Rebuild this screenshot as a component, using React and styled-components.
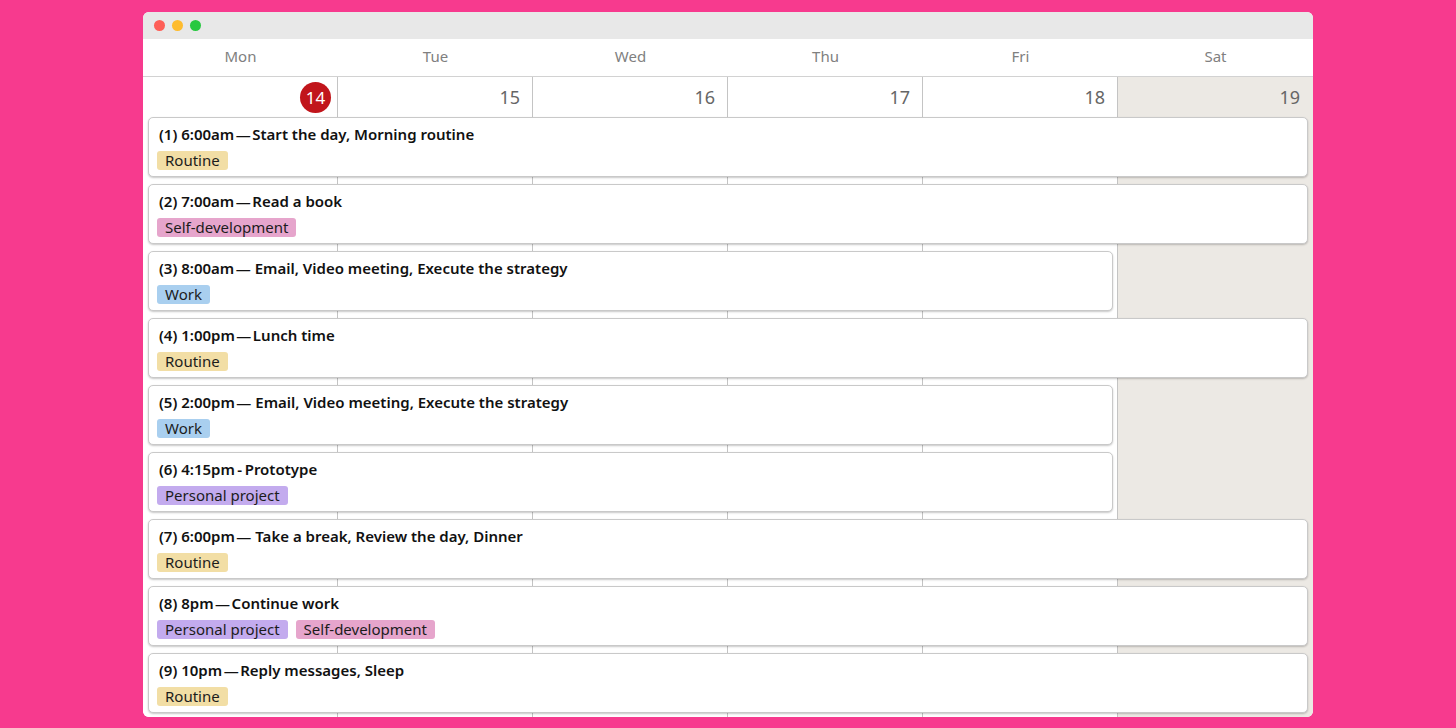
import styled, { createGlobalStyle } from 'styled-components'

const GlobalStyle = createGlobalStyle`
  html, body {
    margin: 0;
    padding: 0;
    background: #f73a8e;
    font-family: 'Noto Sans', 'Open Sans', sans-serif;
  }
`

const Page = styled.div`
  height: 728px;
  padding-top: 12px;
  box-sizing: border-box;
`

const Window = styled.div`
  width: 1170px;
  margin: 0 auto;
  background: #fff;
  border-radius: 6px;
  overflow: hidden;
`

const TitleBar = styled.div`
  height: 27px;
  background: #e8e8e8;
  display: flex;
  align-items: center;
  gap: 7px;
  padding-left: 11px;
`

const Light = styled.span`
  width: 11px;
  height: 11px;
  border-radius: 50%;
  background: ${p => p.$color};
`

const DayNames = styled.div`
  display: grid;
  grid-template-columns: repeat(6, 1fr);
  height: 37px;
  border-bottom: 1px solid #d2d2d2;
`

const DayName = styled.div`
  display: flex;
  align-items: center;
  justify-content: center;
  padding-bottom: 4px;
  font-size: 15px;
  color: #808080;
`

const Board = styled.div`
  display: grid;
  grid-template-columns: repeat(6, 1fr);
  grid-template-rows: 33px repeat(9, 60px);
  row-gap: 7px;
  padding-bottom: 4px;
`

const Column = styled.div`
  grid-column: ${p => p.$index + 1};
  grid-row: 1 / -1;
  margin-bottom: -4px;
  background: ${p => (p.$weekend ? '#ece9e4' : '#fff')};
  border-right: ${p => (p.$last ? 'none' : '1px solid #c4c4c4')};
`

const DateCell = styled.div`
  grid-column: ${p => p.$index + 1};
  grid-row: 1;
  margin-bottom: -7px;
  display: flex;
  align-items: center;
  justify-content: flex-end;
  padding-right: 13px;
  font-size: 18px;
  color: #666;
`

const Today = styled.span`
  width: 31px;
  height: 31px;
  margin-right: -6px;
  border-radius: 50%;
  background: #c1151b;
  color: #fff;
  display: flex;
  align-items: center;
  justify-content: center;
  font-size: 17px;
`

const Event = styled.div`
  grid-column: 1 / ${p => p.$end};
  grid-row: ${p => p.$row};
  margin: 0 5px;
  background: #fff;
  border: 1px solid #c9c9c9;
  border-radius: 5px;
  box-shadow: 0 1px 2px rgba(0, 0, 0, 0.22);
  padding: 6px 10px 0 8px;
  display: flex;
  flex-direction: column;
  gap: 7px;
  z-index: 1;
`

const Title = styled.div`
  font-size: 15px;
  font-weight: 600;
  line-height: 20px;
  color: #111;
  padding-left: 2px;
`

const Tags = styled.div`
  display: flex;
  gap: 8px;
`

const tagColors = {
  Routine: '#f2dea5',
  'Self-development': '#e6a5cc',
  Work: '#a9cfef',
  'Personal project': '#c3abee',
}

const Tag = styled.span`
  font-size: 15px;
  line-height: 19px;
  padding: 0 8px;
  border-radius: 3px;
  color: #1c1c1c;
  background: ${p => tagColors[p.$name]};
`

const days = [
  ['Mon', 14],
  ['Tue', 15],
  ['Wed', 16],
  ['Thu', 17],
  ['Fri', 18],
  ['Sat', 19],
]

const events = [
  { title: '(1) 6:00am\u200a—\u200aStart the day, Morning routine', tags: ['Routine'], full: true },
  { title: '(2) 7:00am\u200a—\u200aRead a book', tags: ['Self-development'], full: true },
  { title: '(3) 8:00am\u200a— Email, Video meeting, Execute the strategy', tags: ['Work'], full: false },
  { title: '(4) 1:00pm\u200a—\u200aLunch time', tags: ['Routine'], full: true },
  { title: '(5) 2:00pm\u200a— Email, Video meeting, Execute the strategy', tags: ['Work'], full: false },
  { title: '(6) 4:15pm\u2009-\u2009Prototype', tags: ['Personal project'], full: false },
  { title: '(7) 6:00pm\u200a— Take a break, Review the day, Dinner', tags: ['Routine'], full: true },
  { title: '(8) 8pm\u200a—\u200aContinue work', tags: ['Personal project', 'Self-development'], full: true },
  { title: '(9) 10pm\u200a—\u200aReply messages, Sleep', tags: ['Routine'], full: true },
]

const App = () => {
  return (
    <Page>
      <GlobalStyle />
      <Window>
        <TitleBar>
          <Light $color='#fe5f57' />
          <Light $color='#febc2e' />
          <Light $color='#28c840' />
        </TitleBar>
        <DayNames>
          {days.map(([name]) => (
            <DayName key={name}>{name}</DayName>
          ))}
        </DayNames>
        <Board>
          {days.map(([name], i) => (
            <Column key={name} $index={i} $weekend={name === 'Sat'} $last={i === 5} />
          ))}
          {days.map(([name, date], i) => (
            <DateCell key={date} $index={i}>
              {i === 0 ? <Today>{date}</Today> : date}
            </DateCell>
          ))}
          {events.map((ev, i) => (
            <Event key={i} $row={i + 2} $end={ev.full ? 7 : 6}>
              <Title>{ev.title}</Title>
              <Tags>
                {ev.tags.map(t => (
                  <Tag key={t} $name={t}>{t}</Tag>
                ))}
              </Tags>
            </Event>
          ))}
        </Board>
      </Window>
    </Page>
  )
}

export default App
